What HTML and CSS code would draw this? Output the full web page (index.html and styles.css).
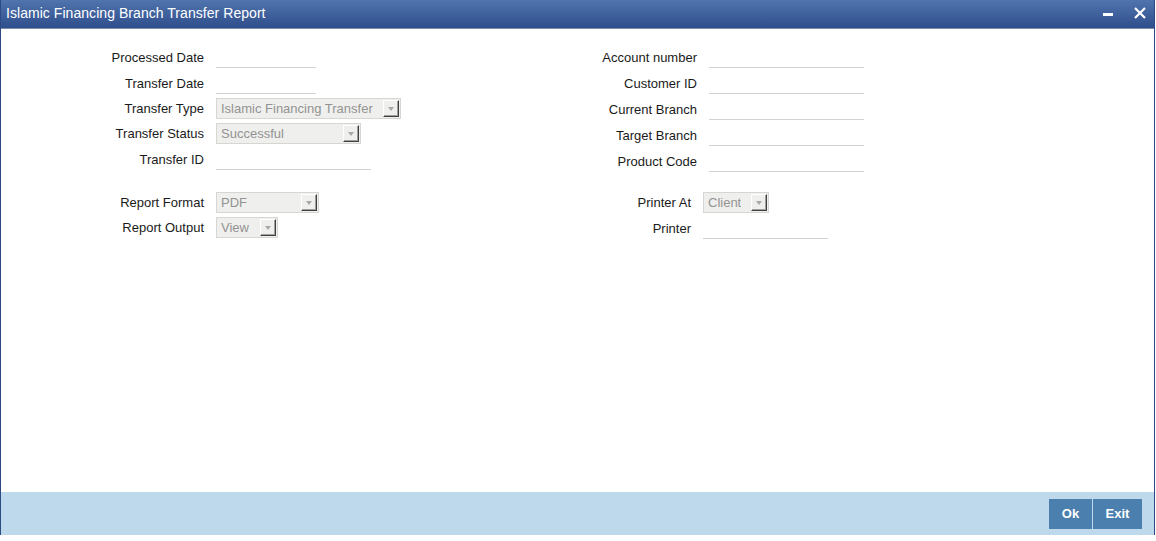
FILE: index.html
```html
<!DOCTYPE html>
<html>
<head>
<meta charset="utf-8">
<link rel="stylesheet" href="styles.css">
</head>
<body>
<div class="window">
  <div class="titlebar">
    <span class="title">Islamic Financing Branch Transfer Report</span>
    <div class="controls">
      <svg class="ic-min" width="12" height="12" viewBox="0 0 12 12"><rect x="1" y="5" width="10" height="3" fill="#fff"/></svg>
      <svg class="ic-close" width="14" height="14" viewBox="0 0 14 14"><path d="M2 2 L12 12 M12 2 L2 12" stroke="#fff" stroke-width="2.2" fill="none"/></svg>
    </div>
  </div>
  <div class="content">
    <div class="col col-left">
      <div class="form">
        <div class="row"><label>Processed Date</label><div class="inp w100"></div></div>
        <div class="row"><label>Transfer Date</label><div class="inp w100"></div></div>
        <div class="row r25"><label>Transfer Type</label><div class="sel w185"><span>Islamic Financing Transfer</span><i class="arr"></i></div></div>
        <div class="row r25"><label>Transfer Status</label><div class="sel w145"><span>Successful</span><i class="arr"></i></div></div>
        <div class="row"><label>Transfer ID</label><div class="inp w155"></div></div>
      </div>
      <div class="form sec2">
        <div class="row r25"><label>Report Format</label><div class="sel w103"><span>PDF</span><i class="arr"></i></div></div>
        <div class="row r25"><label>Report Output</label><div class="sel w62"><span>View</span><i class="arr"></i></div></div>
      </div>
    </div>
    <div class="col col-right">
      <div class="form">
        <div class="row"><label>Account number</label><div class="inp w155"></div></div>
        <div class="row"><label>Customer ID</label><div class="inp w155"></div></div>
        <div class="row"><label>Current Branch</label><div class="inp w155"></div></div>
        <div class="row"><label>Target Branch</label><div class="inp w155"></div></div>
        <div class="row"><label>Product Code</label><div class="inp w155"></div></div>
      </div>
      <div class="form sec2 narrow">
        <div class="row r25"><label>Printer At</label><div class="sel w66"><span>Client</span><i class="arr"></i></div></div>
        <div class="row"><label>Printer</label><div class="inp w125"></div></div>
      </div>
    </div>
  </div>
  <div class="footer">
    <button class="btn btn-ok">Ok</button>
    <button class="btn btn-exit">Exit</button>
  </div>
</div>
</body>
</html>
```
FILE: styles.css
```css
* { box-sizing: border-box; }
html, body { margin: 0; padding: 0; background: #fff; }
body { font-family: "Liberation Sans", Arial, sans-serif; font-size: 13px; color: #1a1a1a; }

.window {
  width: 1155px;
  height: 535px;
  border-left: 1px solid #2c4a84;
  border-right: 1px solid #2c4a84;
  display: flex;
  flex-direction: column;
  background: #fff;
}

.titlebar {
  height: 29px;
  flex: none;
  background: linear-gradient(#5074ad, #2e4e8c);
  border-bottom: 1px solid #7d8fa8;
  display: flex;
  align-items: center;
  justify-content: space-between;
  padding: 0 0 2px 5px;
}
.title { color: #fff; font-size: 14px; letter-spacing: 0.05px; }
.controls { display: flex; align-items: center; gap: 19px; padding-right: 7px; }
.ic-min { margin-top: 2px; }

.content {
  flex: 1;
  display: flex;
  padding: 15px 0 0 103px;
}
.col-left { width: 473px; flex: none; }
.col-right { flex: none; }

.form { display: flex; flex-direction: column; }
.sec2 { margin-top: 18px; }
.col-right .sec2 { margin-top: 16px; }
.row { display: flex; align-items: center; height: 26px; gap: 12px; }
.row.r25 { height: 25px; }
.row label { width: 100px; text-align: right; white-space: nowrap; flex: none; }
.col-right .row label { width: 120px; }
.col-right .narrow .row label { width: 114px; }

.inp {
  height: 20px;
  margin-top: 2px;
  border-bottom: 1px solid #d3d3d3;
}
.w62 { width: 62px; }
.w66 { width: 66px; }
.w100 { width: 100px; }
.w103 { width: 103px; }
.w125 { width: 125px; }
.w145 { width: 145px; }
.w155 { width: 155px; }
.w185 { width: 185px; }

.sel {
  height: 21px;
  background: #efefed;
  border: 1px solid #d6d6d3;
  display: flex;
  align-items: center;
  justify-content: space-between;
  padding: 0 1px 0 4px;
  color: #939393;
}
.sel span { white-space: nowrap; overflow: hidden; }
.arr {
  width: 16px;
  height: 17px;
  flex: none;
  background: #efefed;
  border-top: 1px solid #fff;
  border-left: 1px solid #fff;
  border-right: 1px solid #404040;
  border-bottom: 1px solid #404040;
  box-shadow: inset -1px -1px 0 #a0a0a0;
  position: relative;
}
.arr::after {
  content: "";
  position: absolute;
  left: 4px;
  top: 6px;
  border-left: 3.5px solid transparent;
  border-right: 3.5px solid transparent;
  border-top: 4px solid #a8a8a8;
}

.footer {
  height: 43px;
  flex: none;
  background: #bed9ec;
  display: flex;
  justify-content: flex-end;
  align-items: center;
  gap: 1px;
  padding-right: 12px;
}
.btn {
  height: 30px;
  border: none;
  background: #4a7fae;
  color: #fff;
  font-family: "Liberation Sans", Arial, sans-serif;
  font-size: 13px;
  font-weight: bold;
  padding: 0;
}
.btn-ok { width: 43px; }
.btn-exit { width: 49px; }
```
